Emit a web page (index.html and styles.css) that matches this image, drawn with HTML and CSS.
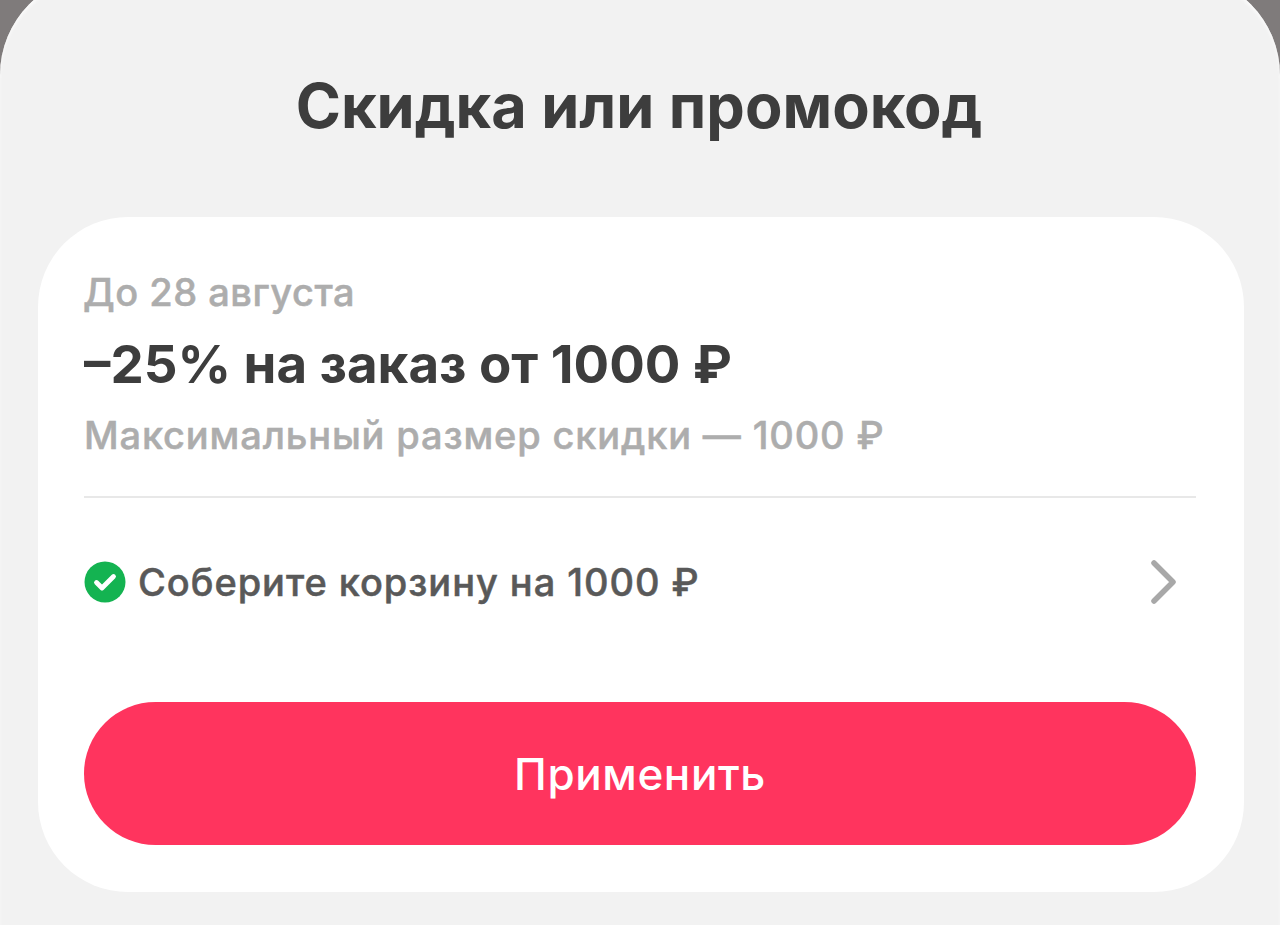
FILE: index.html
```html
<!doctype html>
<html lang="ru">
<head>
    <meta charset="utf-8" />
    <title>Скидка или промокод</title>
    <link rel="stylesheet" href="styles.css">
</head>
<body>
<div class="sheet">
    <h1 class="title">Скидка или промокод</h1>
    <div class="card">
        <p class="date">До 28 августа</p>
        <p class="name">–25% на заказ от 1000 ₽</p>
        <p class="limit">Максимальный размер скидки — 1000 ₽</p>
        <div class="condition">
            <svg class="check" width="42" height="42" viewBox="0 0 42 42">
                <circle cx="21" cy="21" r="20.5" fill="#14b351"/>
                <path d="M12.5 21.5l5.5 5.5 11.5-11.5" fill="none" stroke="#fff" stroke-width="4.8" stroke-linecap="round" stroke-linejoin="round"/>
            </svg>
            <span class="condition-text">Соберите корзину на 1000 ₽</span>
            <svg class="arrow" width="28" height="44" viewBox="0 0 28 44">
                <path d="M4 3l19 19-19 19" fill="none" stroke="#a8a8a8" stroke-width="5.5" stroke-linecap="round" stroke-linejoin="round"/>
            </svg>
        </div>
        <button class="apply">Применить</button>
    </div>
</div>
</body>
</html>
```
FILE: styles.css
```css
*{
    margin:0px;
    padding:0px;
    box-sizing:border-box;
    font-family:'Inter','Noto Sans',sans-serif;
}
html,body{
    width:100%;
    height:925px;
    overflow:hidden;
    background-color:#7f7b7b;
}
.sheet{
    height:975px;
    margin-top:-25px;
    padding:25px 36px 0px 38px;
    border-radius:100px 100px 0px 0px;
    background-color:#f2f2f2;
    box-shadow:inset 0px 3px 3px #fafafa;
}
.title{
    height:217px;
    padding-top:70px;
    padding-right:4px;
    text-align:center;
    font-size:61.2px;
    line-height:72px;
    font-weight:700;
    color:#3d3d3d;
}
.card{
    height:675px;
    padding:52px 48px 0px 46px;
    border-radius:90px;
    background-color:#fff;
}
.date{
    margin-left:-1px;
    font-size:38px;
    line-height:46px;
    font-weight:500;
    -webkit-text-stroke:0.5px #adadad;
    letter-spacing:0.5px;
    color:#adadad;
}
.name{
    margin-top:19px;
    font-size:52.8px;
    line-height:60px;
    font-weight:700;
    color:#3d3d3d;
}
.limit{
    margin-top:18px;
    font-size:38px;
    line-height:46px;
    font-weight:500;
    -webkit-text-stroke:0.5px #adadad;
    letter-spacing:0.85px;
    color:#adadad;
}
.condition{
    display:flex;
    align-items:center;
    height:171px;
    margin-top:38px;
    padding-bottom:2px;
    border-top:2px solid #e8e8e8;
}
.check{
    flex:none;
}
.condition-text{
    flex:1;
    margin-left:12px;
    font-size:38px;
    font-weight:500;
    -webkit-text-stroke:0.5px #595959;
    letter-spacing:0.95px;
    color:#595959;
}
.arrow{
    flex:none;
    margin-right:18px;
}
.apply{
    display:block;
    width:100%;
    height:143px;
    margin-top:35px;
    border:none;
    border-radius:72px;
    background-color:#ff345e;
    color:#fff;
    font-size:44px;
    font-weight:500;
    letter-spacing:0.6px;
}
```
